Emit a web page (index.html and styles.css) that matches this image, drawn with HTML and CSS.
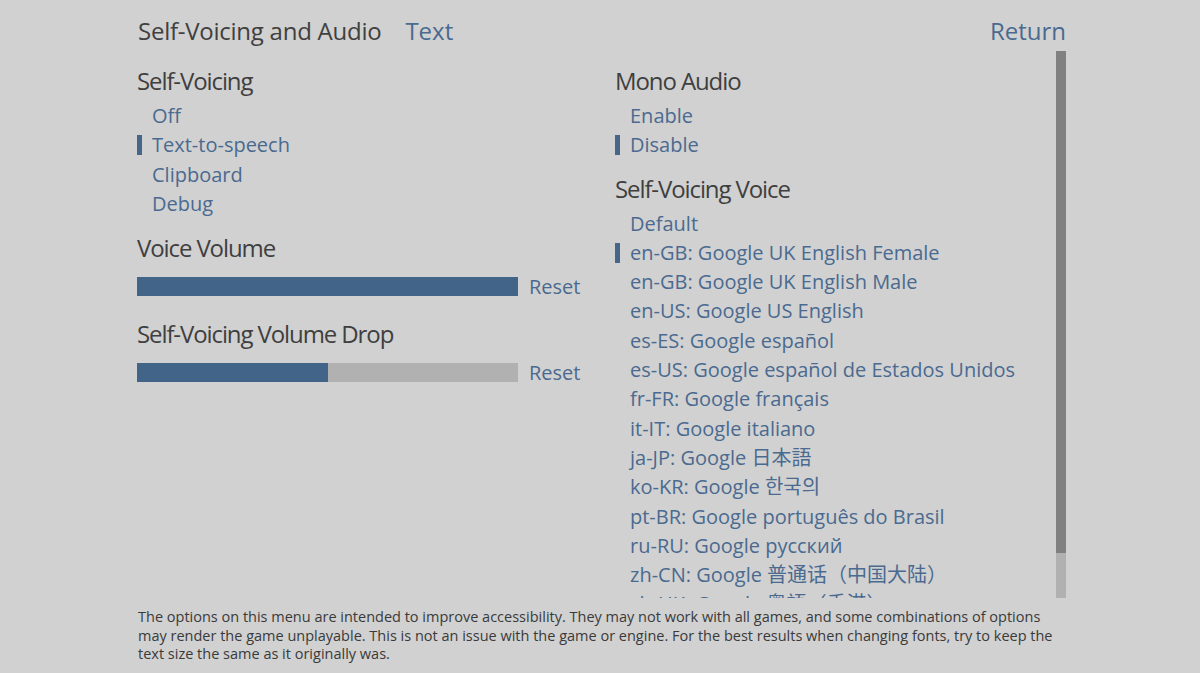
FILE: index.html
```html
<!DOCTYPE html>
<html lang="en">
<head>
<meta charset="utf-8">
<title>Self-Voicing and Audio</title>
<link rel="stylesheet" href="styles.css">
</head>
<body>
<div class="screen">
  <header class="topbar">
    <div class="tabs">
      <span class="tab tab-current">Self-Voicing and Audio</span>
      <span class="tab tab-link">Text</span>
    </div>
    <span class="tab tab-link">Return</span>
  </header>

  <main class="main">
    <section class="col col-left">
      <h2 class="heading">Self-Voicing</h2>
      <ul class="opts">
        <li class="opt">Off</li>
        <li class="opt selected">Text-to-speech</li>
        <li class="opt">Clipboard</li>
        <li class="opt">Debug</li>
      </ul>

      <h2 class="heading">Voice Volume</h2>
      <div class="bar-row">
        <div class="bar"><div class="bar-fill" style="width:100%"></div></div>
        <span class="reset">Reset</span>
      </div>

      <h2 class="heading">Self-Voicing Volume Drop</h2>
      <div class="bar-row">
        <div class="bar"><div class="bar-fill" style="width:50%"></div></div>
        <span class="reset">Reset</span>
      </div>
    </section>

    <section class="col col-right">
      <h2 class="heading">Mono Audio</h2>
      <ul class="opts">
        <li class="opt">Enable</li>
        <li class="opt selected">Disable</li>
      </ul>

      <h2 class="heading">Self-Voicing Voice</h2>
      <ul class="opts voices">
        <li class="opt">Default</li>
        <li class="opt selected">en-GB: Google UK English Female</li>
        <li class="opt">en-GB: Google UK English Male</li>
        <li class="opt">en-US: Google US English</li>
        <li class="opt">es-ES: Google español</li>
        <li class="opt">es-US: Google español de Estados Unidos</li>
        <li class="opt">fr-FR: Google français</li>
        <li class="opt">it-IT: Google italiano</li>
        <li class="opt" lang="ja">ja-JP: Google 日本語</li>
        <li class="opt" lang="ko">ko-KR: Google 한국의</li>
        <li class="opt">pt-BR: Google português do Brasil</li>
        <li class="opt">ru-RU: Google русский</li>
        <li class="opt" lang="zh-CN">zh-CN: Google 普通话（中国大陆）</li>
        <li class="opt" lang="zh-HK">zh-HK: Google 粤語（香港）</li>
      </ul>
    </section>

    <div class="scrollbar"><div class="thumb"></div></div>
  </main>

  <footer class="footer">
    The options on this menu are intended to improve accessibility. They may not work with all games, and some combinations of options may render the game unplayable. This is not an issue with the game or engine. For the best results when changing fonts, try to keep the text size the same as it originally was.
  </footer>
</div>
</body>
</html>
```

FILE: styles.css
```css
html, body {
  margin: 0;
  padding: 0;
  background: #d1d1d1;
}

.screen {
  width: 1200px;
  height: 673px;
  overflow: hidden;
  box-sizing: border-box;
  padding: 0 134px 0 137px;
  font-family: "Open Sans", "Noto Sans CJK SC", sans-serif;
  background: #d1d1d1;
}

.topbar {
  height: 51px;
  box-sizing: border-box;
  padding-top: 11px;
  display: flex;
  justify-content: space-between;
  align-items: flex-start;
}

.tabs {
  display: flex;
  gap: 24px;
}

.tab {
  font-size: 24px;
  line-height: 40px;
}

.tab-current {
  color: #404040;
  letter-spacing: -0.25px;
  padding-left: 1px;
}

.tab-link {
  color: #4a6a90;
}

.main {
  height: 547px;
  overflow: hidden;
  display: grid;
  grid-template-columns: 478px 441px 10px;
  align-items: start;
}

.col {
  min-width: 0;
}

.heading {
  margin: 10px 0 0 0;
  font-size: 24px;
  font-weight: normal;
  line-height: 40px;
  color: #3f3f3f;
  letter-spacing: -1.1px;
  white-space: nowrap;
}

.col-right .heading {
  margin-top: 9px;
}

.col-right .heading:first-child {
  margin-top: 10px;
}

.opts {
  list-style: none;
  margin: 0;
  padding: 0;
}

.opt {
  position: relative;
  padding-left: 15px;
  font-size: 20px;
  line-height: 29.3px;
  color: #4a6a90;
  white-space: nowrap;
}

.opt.selected::before {
  content: "";
  position: absolute;
  left: 0;
  top: 5px;
  width: 5px;
  height: 20px;
  background: #456589;
}

.opt:lang(ja) { font-family: "Open Sans", "Noto Sans CJK JP", sans-serif; }
.opt:lang(ko) { font-family: "Open Sans", "Noto Sans CJK KR", sans-serif; }
.opt:lang(zh-HK) { font-family: "Open Sans", "Noto Sans CJK TC", sans-serif; }

.bar-row {
  height: 36px;
  display: flex;
  align-items: center;
  gap: 11px;
}

.bar {
  width: 381px;
  height: 19px;
  background: #b1b1b1;
}

.bar-fill {
  height: 100%;
  background: #436489;
}

.reset {
  font-size: 20px;
  line-height: 29px;
  color: #4a6a90;
}

.scrollbar {
  height: 547px;
  background: #b1b1b1;
}

.thumb {
  height: 502px;
  background: #808080;
}

.footer {
  padding: 10px 4px 0 1px;
  font-size: 14.5px;
  line-height: 18.5px;
  color: #3a3a3a;
}
```
